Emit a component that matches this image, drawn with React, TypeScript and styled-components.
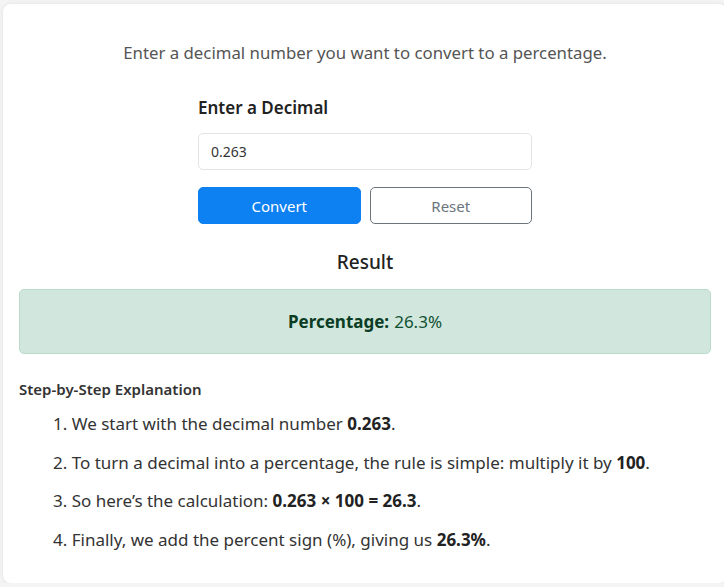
import React, { useState } from 'react'
import styled, { createGlobalStyle } from 'styled-components'

const GlobalStyle = createGlobalStyle`
  html, body {
    margin: 0;
    padding: 0;
    background: #f4f4f4;
    overflow: hidden;
  }
  body {
    font-family: 'Noto Sans', 'Open Sans', sans-serif;
    color: #333;
  }
`

const Page = styled.div`
  padding: 4px 0 0 3px;
`

const Card = styled.div`
  width: 724px;
  height: 579px;
  box-sizing: border-box;
  padding: 16px;
  background: #fff;
  border-radius: 8px;
  box-shadow: 0 0 4px rgba(0, 0, 0, 0.08);
`

const Intro = styled.p`
  margin: 21px 0 0 0;
  text-align: center;
  font-size: 16.8px;
  line-height: 24px;
  color: #555;
`

const Form = styled.div`
  width: 334px;
  margin: 31px auto 0 auto;
  display: flex;
  flex-direction: column;
`

const Label = styled.label`
  font-size: 17px;
  line-height: 24px;
  font-weight: 600;
  color: #222;
`

const Input = styled.input`
  margin-top: 13px;
  height: 37px;
  box-sizing: border-box;
  padding: 0 12px;
  border: 1px solid #e2e5e8;
  border-radius: 5px;
  font-family: inherit;
  font-size: 14px;
  color: #333;
  outline: none;
`

const ButtonRow = styled.div`
  margin-top: 17px;
  display: grid;
  grid-template-columns: 1fr 1fr;
  gap: 9px;
`

const Button = styled.button<{ $primary?: boolean }>`
  height: 37px;
  border-radius: 5px;
  font-family: inherit;
  font-size: 15px;
  cursor: pointer;
  border: 1px solid ${(p) => (p.$primary ? '#0d80f2' : '#6c757d')};
  background: ${(p) => (p.$primary ? '#0d80f2' : '#fff')};
  color: ${(p) => (p.$primary ? '#fff' : '#6c757d')};
`

const ResultTitle = styled.h3`
  margin: 25px 0 0 0;
  text-align: center;
  font-size: 19px;
  line-height: 26px;
  font-weight: 500;
  color: #222;
`

const ResultBox = styled.div`
  margin-top: 14px;
  height: 65px;
  box-sizing: border-box;
  display: flex;
  align-items: center;
  justify-content: center;
  background: #d1e7dd;
  border: 1px solid #badbcc;
  border-radius: 5px;
  color: #0f5132;
  font-size: 17px;

  strong {
    font-weight: 700;
    color: #0b3d24;
    margin-right: 5px;
  }
`

const StepsTitle = styled.h4`
  margin: 25px 0 0 0;
  font-size: 15px;
  line-height: 20px;
  font-weight: 600;
  color: #333;
`

const Steps = styled.ol`
  margin: 13px 0 0 0;
  padding-left: 34px;
  list-style-position: inside;
  font-size: 17px;
  line-height: 24px;
  color: #333;

  li {
    margin-bottom: 14.5px;
  }

  strong {
    color: #222;
    font-weight: 700;
  }
`

const App: React.FC = () => {
  const [value, setValue] = useState('0.263')

  return (
    <Page>
      <GlobalStyle />
      <Card>
        <Intro>Enter a decimal number you want to convert to a percentage.</Intro>
        <Form>
          <Label htmlFor="decimal">Enter a Decimal</Label>
          <Input id="decimal" value={value} onChange={(e) => setValue(e.target.value)} />
          <ButtonRow>
            <Button $primary>Convert</Button>
            <Button onClick={() => setValue('')}>Reset</Button>
          </ButtonRow>
        </Form>
        <ResultTitle>Result</ResultTitle>
        <ResultBox>
          <strong>Percentage:</strong> 26.3%
        </ResultBox>
        <StepsTitle>Step-by-Step Explanation</StepsTitle>
        <Steps>
          <li>
            We start with the decimal number <strong>0.263</strong>.
          </li>
          <li>
            To turn a decimal into a percentage, the rule is simple: multiply it by <strong>100</strong>.
          </li>
          <li>
            So here’s the calculation: <strong>0.263 × 100 = 26.3</strong>.
          </li>
          <li>
            Finally, we add the percent sign (%), giving us <strong>26.3%</strong>.
          </li>
        </Steps>
      </Card>
    </Page>
  )
}

export default App
